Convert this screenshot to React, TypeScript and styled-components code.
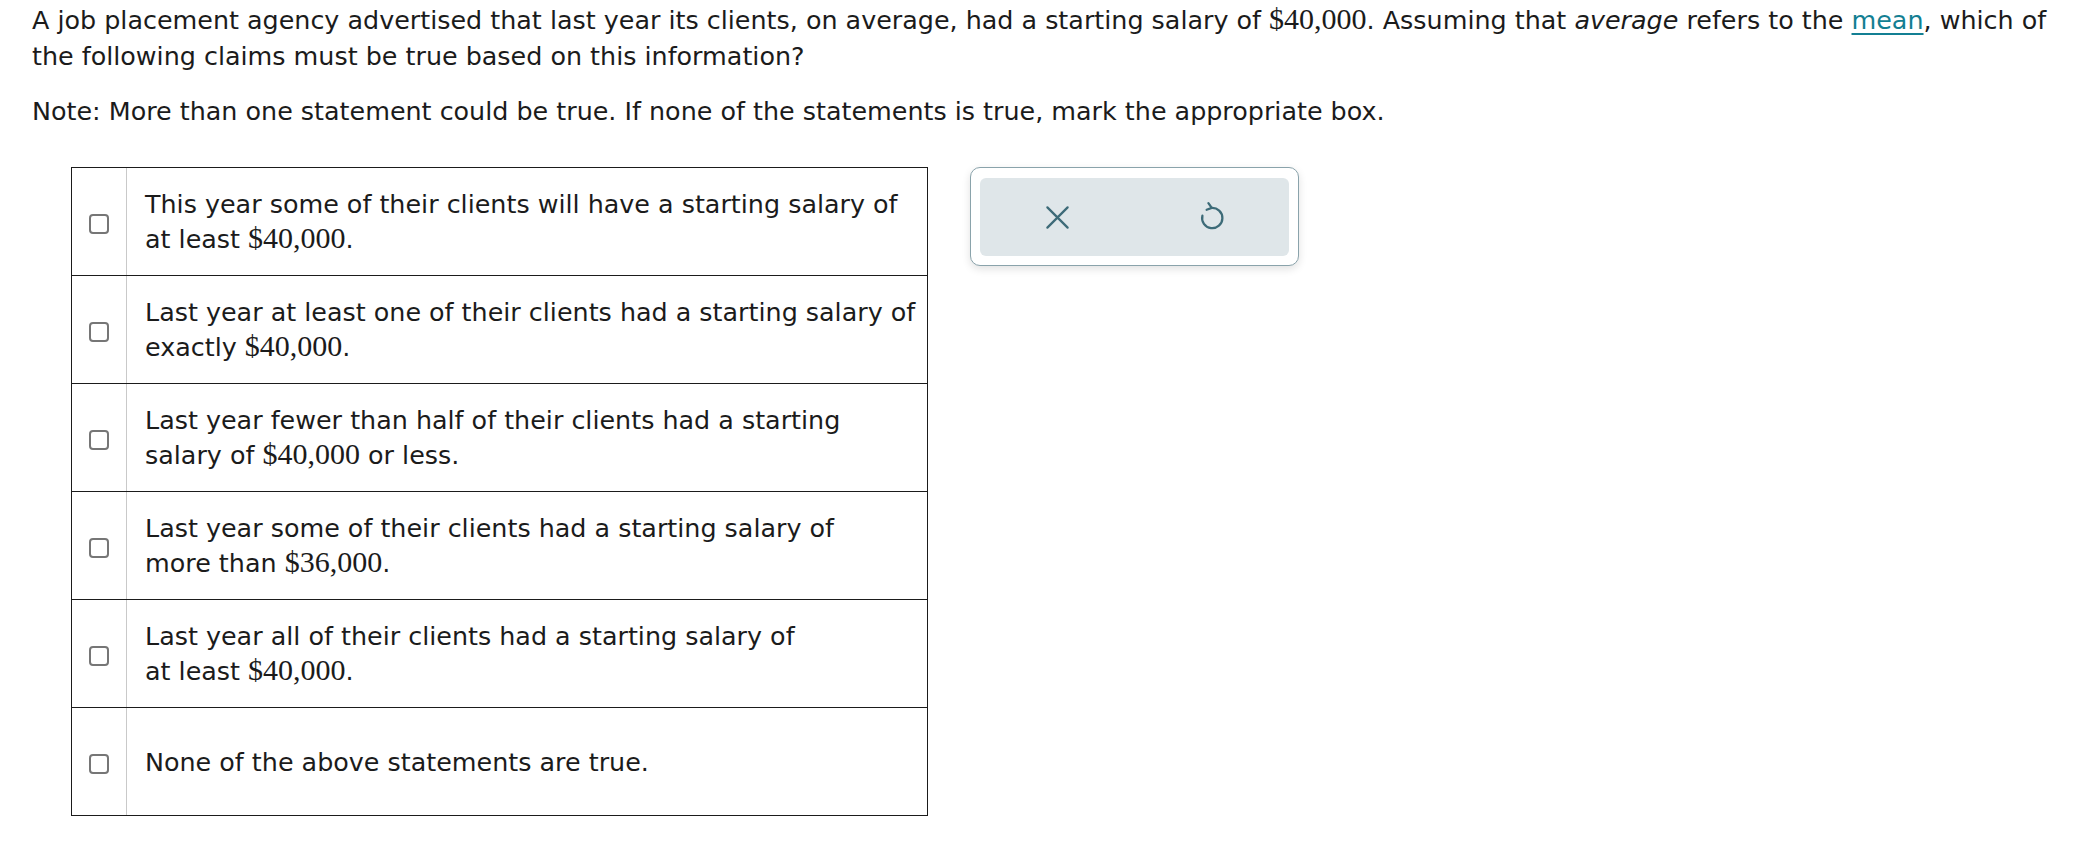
import styled, { createGlobalStyle } from "styled-components";

const GlobalStyle = createGlobalStyle`
  html, body {
    margin: 0;
    padding: 0;
    background: #ffffff;
  }
  body {
    font-family: "DejaVu Sans", Verdana, sans-serif;
    font-size: 25.4px;
    color: #1b1b1b;
  }
`;

type Choice = { lines: React.ReactNode[] };

const Money = ({ children }: { children: string }) => <Math>{children}</Math>;

const choices: Choice[] = [
  {
    lines: [
      "This year some of their clients will have a starting salary of",
      <>
        at least <Money>$40,000</Money>.
      </>,
    ],
  },
  {
    lines: [
      "Last year at least one of their clients had a starting salary of",
      <>
        exactly <Money>$40,000</Money>.
      </>,
    ],
  },
  {
    lines: [
      "Last year fewer than half of their clients had a starting",
      <>
        salary of <Money>$40,000</Money> or less.
      </>,
    ],
  },
  {
    lines: [
      "Last year some of their clients had a starting salary of",
      <>
        more than <Money>$36,000</Money>.
      </>,
    ],
  },
  {
    lines: [
      "Last year all of their clients had a starting salary of",
      <>
        at least <Money>$40,000</Money>.
      </>,
    ],
  },
  { lines: ["None of the above statements are true."] },
];

const App = () => {
  return (
    <>
      <GlobalStyle />
      <Page>
        <Question>
          A job placement agency advertised that last year its clients, on average, had a starting
          salary of <Money>$40,000</Money>. Assuming that <em>average</em> refers to the{" "}
          <Link href="#">mean</Link>, which of the following claims must be true based on this
          information?
        </Question>
        <Note>
          Note: More than one statement could be true. If none of the statements is true, mark the
          appropriate box.
        </Note>
        <Workspace>
          <ChoiceTable>
            {choices.map((c, i) => (
              <ChoiceRow key={i}>
                <BoxCell>
                  <CheckBox />
                </BoxCell>
                <TextCell>
                  {c.lines.map((l, j) => (
                    <Line key={j}>{l}</Line>
                  ))}
                </TextCell>
              </ChoiceRow>
            ))}
          </ChoiceTable>
          <ToolPanel>
            <ToolInner>
              <ToolButton aria-label="Clear">
                <svg width="27" height="27" viewBox="0 0 24 24" fill="none">
                  <path
                    d="M3 3 L21 21 M21 3 L3 21"
                    stroke="#3d6b78"
                    strokeWidth="2"
                    strokeLinecap="round"
                  />
                </svg>
              </ToolButton>
              <ToolButton aria-label="Undo">
                <svg width="32" height="32" viewBox="0 0 24 24" fill="none">
                  <path
                    d="M11.5 5.2 A7.6 7.6 0 1 1 4.8 11"
                    stroke="#3d6b78"
                    strokeWidth="1.7"
                    strokeLinecap="round"
                  />
                  <path
                    d="M9.3 1.6 L11.8 5.2 L8 6.6"
                    stroke="#3d6b78"
                    strokeWidth="1.7"
                    strokeLinecap="round"
                    strokeLinejoin="round"
                  />
                </svg>
              </ToolButton>
            </ToolInner>
          </ToolPanel>
        </Workspace>
      </Page>
    </>
  );
};

const Page = styled.div`
  padding: 1px 14px 0 32px;
`;

const Question = styled.p`
  margin: 0;
  line-height: 36px;
`;

const Note = styled.p`
  margin: 19px 0 0;
  line-height: 36px;
`;

const Math = styled.span`
  font-family: "Liberation Serif", "Times New Roman", serif;
  font-size: 30px;
`;

const Link = styled.a`
  color: #137f93;
  text-decoration: underline;
  text-underline-offset: 4px;
`;

const Workspace = styled.div`
  display: flex;
  align-items: flex-start;
  gap: 42px;
  margin-top: 38px;
  margin-left: 39px;
`;

const ChoiceTable = styled.div`
  width: 857px;
  flex-shrink: 0;
  border: 1px solid #1b1b1b;
  box-sizing: border-box;
  display: flex;
  flex-direction: column;
`;

const ChoiceRow = styled.div`
  display: flex;
  height: 107px;
  & + & {
    border-top: 1px solid #1b1b1b;
  }
`;

const BoxCell = styled.div`
  width: 55px;
  flex-shrink: 0;
  border-right: 1px solid #c9c9c9;
  display: flex;
  align-items: center;
  justify-content: center;
  padding-top: 4px;
  box-sizing: border-box;
`;

const CheckBox = styled.span`
  display: block;
  width: 20px;
  height: 20px;
  box-sizing: border-box;
  border: 2px solid #767676;
  border-radius: 4px;
  background: #fff;
`;

const TextCell = styled.div`
  flex: 1;
  min-width: 0;
  display: flex;
  flex-direction: column;
  justify-content: center;
  padding: 0 10px 0 18px;
`;

const Line = styled.div`
  line-height: 34px;
  white-space: nowrap;
`;

const ToolPanel = styled.div`
  width: 329px;
  height: 99px;
  flex-shrink: 0;
  box-sizing: border-box;
  padding: 10px 9px 9px;
  border: 1px solid #8aa3ab;
  border-radius: 10px;
  background: #fff;
  box-shadow: 0 3px 8px rgba(0, 0, 0, 0.12);
`;

const ToolInner = styled.div`
  height: 100%;
  display: flex;
  background: #dfe6e9;
  border-radius: 6px;
`;

const ToolButton = styled.button`
  flex: 1;
  border: none;
  background: transparent;
  display: flex;
  align-items: center;
  justify-content: center;
  padding: 0;
  cursor: pointer;
`;

export default App;
